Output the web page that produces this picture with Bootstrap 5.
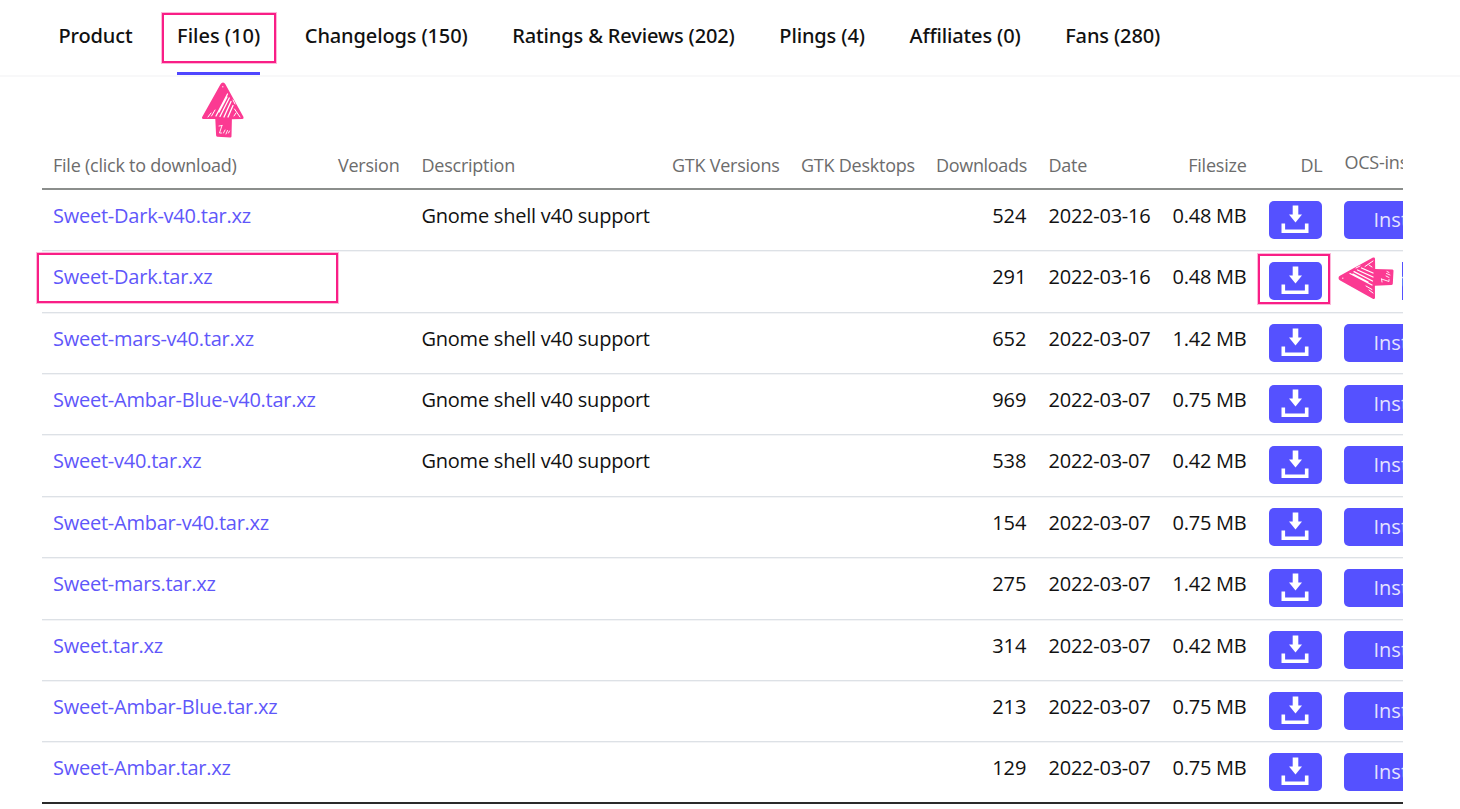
<!DOCTYPE html>
<html lang="en">
<head>
<meta charset="utf-8">
<title>Files</title>
<link href="https://cdn.jsdelivr.net/npm/bootstrap@5.3.0/dist/css/bootstrap.min.css" rel="stylesheet">
<style>
body{font-family:"Open Sans","Noto Sans",sans-serif;background:#fff;color:#111;overflow:hidden;height:809px}
.tabs{height:77px;border-bottom:2px solid #f8f8f9;padding:0 0 0 58.500px;gap:44.6px;font-family:"Noto Sans","Open Sans",sans-serif;letter-spacing:-.13px}
.tabs .nav-link{padding:0;height:75px;line-height:72px;font-size:20px;font-weight:500;color:#111;border-bottom:3px solid transparent;white-space:nowrap;position:relative}
.tabs .nav-link.active{border-color:#4f46ff;letter-spacing:0}
.mark-box{position:absolute;border:2px solid #f91e86;box-shadow:0 0 0 1px #f91e8650;pointer-events:none}
.mark-arrow{position:absolute;pointer-events:none}
main{padding:67px 57px 0 42px}
.files{overflow:hidden}
.files table{width:1440px;font-size:20px;line-height:30px;letter-spacing:-.24px}
.files tr{display:grid;grid-template-columns:285px 83.5px 250.500px 129px 135px 112.500px 124px 97px 75px 180px}
.files th,.files td{padding:11px 11px 0;white-space:nowrap;position:relative}
.files td:nth-child(6){letter-spacing:0}
.files th:nth-child(6){letter-spacing:-.32px;padding-right:12px}
.files th:nth-child(8),.files td:nth-child(8){padding-right:12px}
.files thead tr{height:46px;border-bottom:2px solid #8b8e8c}
.files th{font-weight:400;font-size:18px;color:#6c6c6c;padding-top:6px}
.files tbody tr{height:61.37px;border-bottom:1px solid #dde1e6;box-shadow:0 1px #f3f4f6}
.files tbody tr:last-child{border-bottom:2px solid #2a2a2a}
.files a{color:#5f57fa;text-decoration:none}
.files td.act{padding:11px 10px 0}
.files .btn{background:#5551ff;border:0;border-radius:5px;height:38px;padding:0;color:#e4e3ff;font-size:20px;line-height:38px}
.dl{width:53px}.inst{width:130px;text-align:left;padding-left:30px!important}
</style>
</head>
<body>
<nav class="nav tabs flex-nowrap">
  <a class="nav-link">Product</a>
  <a class="nav-link active">Files (10)<span class="mark-box" style="left:-15px;top:13px;width:114px;height:50px"></span>
  <svg class="mark-arrow" style="left:23px;top:81px" width="46" height="58" viewBox="0 0 46 58"><g id="arrow"><path d="M23 1.5q1.5 0 2.4 1.8L43.500 36q.5 2-1.200 2l-10.400.2-.4 17.300q-.2 1-1.200 1l-13-.7q-1.200-.2-1.200-1.500l-.8-16.400-12 .1q-2-.3-1-2.200L20.500 3.200q1-1.700 2.500-1.700z" fill="#fb3a92"/><g stroke="#fff" fill="none" stroke-linecap="round"><path d="M27.500 13L16 35M29.300 17L20 35.500M31 20.500L24 36M33 24.500L28 36M27 16L19 31" stroke-width="1.300"/><path d="M15 29l-3.500 6M34.500 28l5.500 8M36 32l-2 3M11 32l-3 4M22.500 5.800h.5M33 19l2 4" stroke-width="1"/><path d="M22 44.500l-2.500 7.500h2M19 45l3-.5M23.500 52l1.500-3M26 53l1.500-3.500M28.500 52l1-2" stroke-width=".9"/></g></g></svg></a>
  <a class="nav-link">Changelogs (150)</a>
  <a class="nav-link">Ratings &amp; Reviews (202)</a>
  <a class="nav-link">Plings (4)</a>
  <a class="nav-link">Affiliates (0)</a>
  <a class="nav-link">Fans (280)</a>
</nav>
<main class="position-relative">
<div class="files">
<table>
<thead><tr><th>File (click to download)</th><th>Version</th><th>Description</th><th>GTK Versions</th><th>GTK Desktops</th><th class="text-end">Downloads</th><th>Date</th><th class="text-end">Filesize</th><th class="text-end">DL</th><th style="top:-3px">OCS-install</th></tr></thead>
<tbody id="rows"></tbody>
</table>
</div>
<span class="mark-box" style="left:37px;top:176px;width:301px;height:50px"></span>
<span class="mark-box" style="left:1258px;top:177px;width:72px;height:50px"></span>
<span class="position-absolute bg-white" style="left:1336px;top:178px;width:66px;height:50px"></span>
<svg class="mark-arrow" style="left:1337px;top:178px" width="58" height="46" viewBox="0 0 58 46"><use href="#arrow" transform="matrix(0 -1 1 0 0 46)"/></svg>
</main>
<script src="https://cdn.jsdelivr.net/npm/bootstrap@5.3.0/dist/js/bootstrap.bundle.min.js"></script>
<script>
const g='Gnome shell v40 support';
const files=[['Sweet-Dark-v40',g,524,'16','0.48'],['Sweet-Dark','',291,'16','0.48'],['Sweet-mars-v40',g,652,'07','1.42'],['Sweet-Ambar-Blue-v40',g,969,'07','0.75'],['Sweet-v40',g,538,'07','0.42'],['Sweet-Ambar-v40','',154,'07','0.75'],['Sweet-mars','',275,'07','1.42'],['Sweet','',314,'07','0.42'],['Sweet-Ambar-Blue','',213,'07','0.75'],['Sweet-Ambar','',129,'07','0.75']];
document.getElementById('rows').innerHTML=files.map(f=>`<tr><td><a href="#">${f[0]}.tar.xz</a></td><td></td><td>${f[1]}</td><td></td><td></td><td class="text-end">${f[2]}</td><td>2022-03-${f[3]}</td><td class="text-end">${f[4]} MB</td><td class="act"><button class="btn dl d-block"><svg class="d-block mx-auto" width="28" height="30" viewBox="0 0 28 30" fill="#fff"><path d="M11.700 0.500h5.600v9H21L14.500 17.500 8 9.500h3.700z"/><path d="M2.300 18.500v7.700h23.400v-7.700" fill="none" stroke="#fff" stroke-width="3.600"/></svg></button></td><td class="act"><button class="btn inst">Install</button></td></tr>`).join('');
</script>
</body>
</html>
